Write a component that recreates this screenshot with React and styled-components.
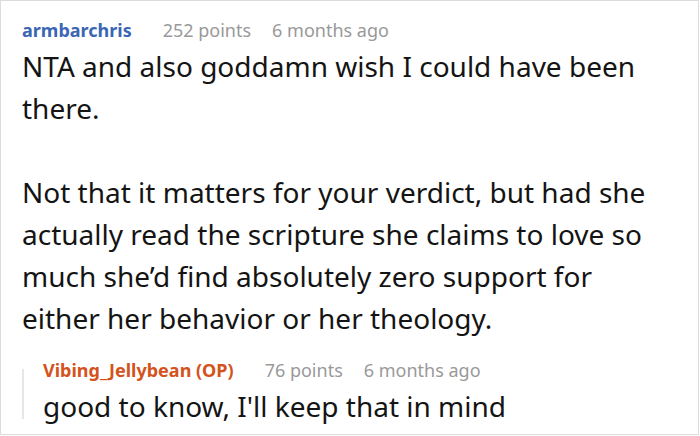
import React from "react";
import styled, { createGlobalStyle } from "styled-components";

const Global = createGlobalStyle`
  html, body { margin: 0; padding: 0; background: #fff; }
  body { font-family: "Noto Sans", "Open Sans", sans-serif; }
`;

const Card = styled.div`
  box-sizing: border-box;
  width: 699px;
  height: 435px;
  border: 1px solid #dcdcdc;
  padding: 17px 0 0 21px;
  overflow: hidden;
  background: #fff;
`;

const Meta = styled.div`
  display: flex;
  align-items: baseline;
  height: 24px;
  line-height: 24px;
  font-size: 18px;
`;

const Author = styled.span`
  font-weight: 700;
  color: ${(p) => (p.$op ? "#d4521c" : "#3a66b4")};
  margin-right: 31px;
`;

const Stat = styled.span`
  color: #999;
  margin-right: 21px;
`;

const Body = styled.div`
  font-size: 28px;
  line-height: 42px;
  color: #141414;
  margin-top: 3px;
  width: 640px;
`;

const Para = styled.p`
  margin: 0 0 42px 0;
  &:last-child { margin-bottom: 0; }
`;

const Reply = styled.div`
  position: relative;
  margin-top: 19px;
  padding-left: 21px;
  &::before {
    content: "";
    position: absolute;
    left: 0;
    top: 11px;
    bottom: 8px;
    width: 2px;
    background: #e6e6e6;
  }
`;

function Comment({ author, op, points, time, children }) {
  return (
    <>
      <Meta>
        <Author $op={op}>{author}</Author>
        <Stat>{points} points</Stat>
        <Stat>{time}</Stat>
      </Meta>
      <Body>{children}</Body>
    </>
  );
}

export default function App() {
  return (
    <>
      <Global />
      <Card>
        <Comment author="armbarchris" points={252} time="6 months ago">
          <Para>NTA and also goddamn wish I could have been there.</Para>
          <Para>
            Not that it matters for your verdict, but had she actually read the
            scripture she claims to love so much she’d find absolutely zero
            support for either her behavior or her theology.
          </Para>
        </Comment>
        <Reply>
          <Comment author="Vibing_Jellybean (OP)" op points={76} time="6 months ago">
            <Para>good to know, I'll keep that in mind</Para>
          </Comment>
        </Reply>
      </Card>
    </>
  );
}
